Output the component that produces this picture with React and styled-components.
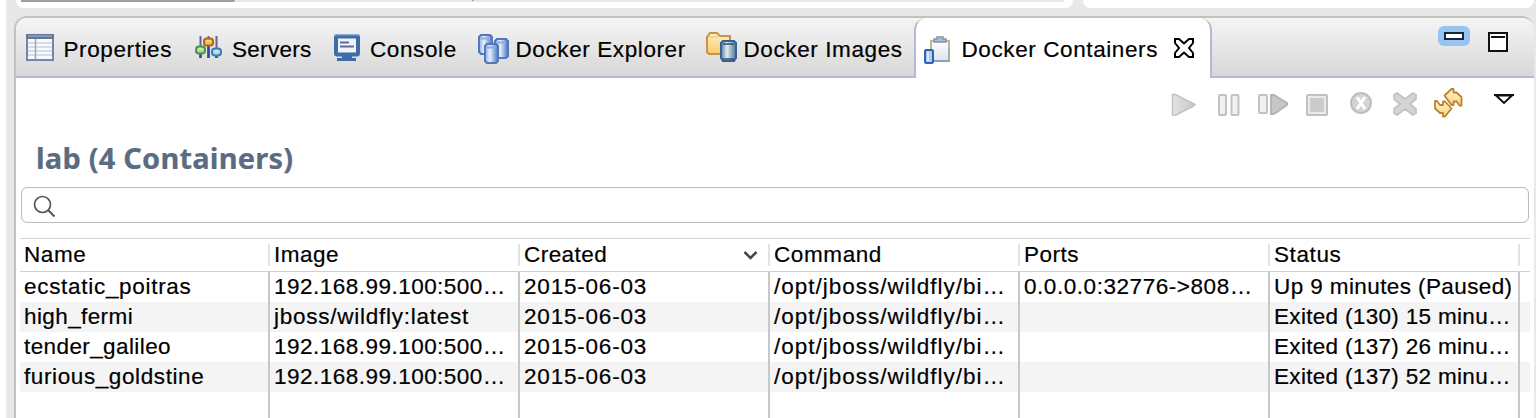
import React from "react";
import styled, { createGlobalStyle } from "styled-components";

const Global = createGlobalStyle`
  * { box-sizing: border-box; }
  body { margin: 0; background: #fff; overflow: hidden; }
`;

const Window = styled.div`
  width: 1536px;
  height: 418px;
  padding-left: 6px;
  font: 22.5px/30px "Liberation Sans", Arial, sans-serif;
  -webkit-text-stroke: 0.2px currentColor;
  color: #000;
  overflow: hidden;
`;
const Workbench = styled.div`
  height: 418px;
  background: #e8e8e8;
  padding: 0 2px 0 8px;
  display: flex;
  flex-direction: column;
`;
const UpperPanes = styled.div`
  display: flex;
  gap: 10px;
  height: 8px;
  padding-left: 2px;
  margin-bottom: 8px;
`;
const UpperPane = styled.div`
  width: ${(p) => p.$width}px;
  background: #fff;
  border-radius: 0 0 9px 9px;
  padding: 0 9px 0 5px;
`;
const ScrollTrack = styled.div`
  height: 2px;
  background: #e8e8e8;
  display: flex;
  gap: 237px;
`;
const ScrollThumb = styled.div`
  width: ${(p) => p.$width}px;
  height: ${(p) => p.$height}px;
  background: #9f9f9f;
  border-radius: 0 0 2px 0;
`;
const View = styled.section`
  flex: 1;
  background: #fff;
  border-top: 2px solid #c3c3bc;
  border-left: 2px solid #c3c3bc;
  border-radius: 13px 12px 0 0;
  overflow: hidden;
`;
const TabBar = styled.div`
  display: flex;
  height: 60px;
  background: linear-gradient(#f5f5f5, #d8d8d8);
  border-bottom: 2px solid #b6bace;
`;
const Tab = styled.div`
  display: flex;
  width: ${(p) => p.$width}px;
  padding: 17px 0 0 ${(p) => p.$pad}px;
  letter-spacing: ${(p) => p.$track ?? 0.6}px;
  white-space: nowrap;
  flex: none;
  svg { margin: ${(p) => p.$iconTop ?? -3}px ${(p) => p.$gap}px 0 0; flex: none; }
`;
const ActiveTab = styled(Tab)`
  height: 60px;
  background: #fff;
  border: solid #b6bace;
  border-width: 0 2px;
  border-radius: 12px 12px 0 0;
`;
const CloseIcon = styled.span`
  margin-left: 15px;
  svg { margin: 2px 0 0; display: block; }
`;
const WindowButtons = styled.div`
  display: flex;
  margin-left: auto;
  padding: 8px 25px 0 0;
  gap: 17px;
`;
const MinimizeButton = styled.div`
  width: 32px;
  height: 20px;
  border-radius: 6px;
  background: #97c4f3;
  padding: 6px 0 0 6px;
  svg { display: block; }
`;
const MaximizeButton = styled.div`
  padding-top: 4px;
  svg { display: block; }
`;
const Toolbar = styled.div`
  display: flex;
  justify-content: flex-end;
  height: 60px;
  padding: 8px 19px 0 0;
`;
const Title = styled.h1`
  margin: 0;
  padding-left: 20px;
  height: 49px;
  font: bold 29px/39px "Noto Sans", sans-serif;
  letter-spacing: 0.2px;
  color: #5b6c82;
`;
const SearchBox = styled.div`
  margin: 0 5px 0 5px;
  height: 36px;
  border: 1px solid #bdbdbd;
  border-radius: 6px;
  box-shadow: inset 0 0 1px #ddd;
  padding: 7px 0 0 11px;
`;
const Table = styled.div`
  margin: 15px 4px 0;
  border-top: 1px solid #d4d4d4;
`;
const HeaderRow = styled.div`
  display: flex;
  height: 33px;
  padding-top: 5px;
  border-bottom: 1px solid #d0d0d0;
`;
const HeaderCell = styled.div`
  display: flex;
  width: 250px;
  height: 22px;
  padding: 0 10px 0 4px;
  line-height: 22px;
  letter-spacing: ${(p) => p.$track ?? 1}px;
  border-right: 2px solid #e2e2e2;
  svg { margin: 6px 0 0 auto; }
`;
const Row = styled.div`
  display: flex;
  height: 30px;
  background: ${(p) => (p.$shaded ? "#f4f4f4" : "#fff")};
`;
const Cell = styled.div`
  width: 250px;
  padding-left: ${(p) => p.$pad ?? 4}px;
  border-right: 2px solid #c8c8c8;
  letter-spacing: ${(p) => p.$track}px;
  white-space: nowrap;
  line-height: 29px;
`;

const PropertiesIcon = () => (
  <svg width="28" height="28" viewBox="0 0 28 28">
    <rect x="1" y="2" width="26" height="25" fill="#f7f9fc" stroke="#7686a7" strokeWidth="2" />
    <path d="M0 1h28v5H0z" fill="#62789b" /><path d="M2 3h24" stroke="#a9b9cf" />
    <path d="M2 10h24M2 14h24M2 18h24M2 22h24" stroke="#ccd3df" strokeWidth="1.5" />
    <path d="M9.5 6v20" stroke="#9ba7bd" strokeWidth="1.5" />
  </svg>
);
const ServersIcon = () => (
  <svg width="28" height="28" viewBox="0 0 28 28">
    <path d="M5.500 4v22M13.500 4v22M21.500 4v22" stroke="#6d5d93" strokeWidth="2" />
    <path d="M5.500 20v6M13.500 14v12M21.500 22v4" stroke="#2e45b5" strokeWidth="2.500" />
    <rect x="1" y="14.500" width="9" height="7" rx="3" fill="#b4dc86" stroke="#469551" strokeWidth="2" />
    <rect x="9" y="6.500" width="9" height="7" rx="2.500" fill="#efbd52" stroke="#ad6b14" strokeWidth="2" />
    <rect x="17" y="16.500" width="9" height="7" rx="3" fill="#a8d9ed" stroke="#3e7db2" strokeWidth="2" />
    <path d="M3 17h5M11 9h5M19 19h5" stroke="#fff" strokeOpacity=".65" />
  </svg>
);
const ConsoleIcon = () => (
  <svg width="28" height="30" viewBox="0 -1 28 30">
    <rect x="3" y="3.500" width="22" height="18" rx="1" fill="#eef3fc" stroke="#3f6da6" strokeWidth="4" />
    <path d="M1 2h26" stroke="#75a8dc" />
    <path d="M7 9.500h9M7 13.500h14" stroke="#60699b" strokeWidth="2" />
    <path d="M9 23h10v2h4v3H4v-3h5z" fill="#3d6ba5" />
  </svg>
);
const Cylinder = ({ x, y, fill = "url(#cyl)" }) => (
  <g transform={`translate(${x} ${y})`}>
    <path d="M3 1h9l2 2v15l-2 2H3l-2-2V3z" fill={fill} stroke="#5277bb" strokeWidth="2" />
    <path d="M3 4.500h9" stroke="#8eaee1" strokeWidth="2" />
  </g>
);
const Gradients = () => (
  <defs>
    <linearGradient id="cyl"><stop stopColor="#8da9e4" /><stop offset=".38" stopColor="#e7f0ff" /><stop offset="1" stopColor="#4f74c1" /></linearGradient>
    <linearGradient id="steel"><stop stopColor="#5b7f9d" /><stop offset=".4" stopColor="#e0eeee" /><stop offset="1" stopColor="#4b7398" /></linearGradient>
    <linearGradient id="folder" x2="0" y2="1"><stop stopColor="#fff0bd" /><stop offset="1" stopColor="#f7cc71" /></linearGradient>
    <linearGradient id="paper" x2="0" y2="1"><stop stopColor="#fff" /><stop offset="1" stopColor="#dce3f4" /></linearGradient>
    <linearGradient id="gray"><stop stopColor="#e3e3e3" /><stop offset="1" stopColor="#c6c6c6" /></linearGradient>
    <linearGradient id="gold" x2="0" y2="1"><stop stopColor="#fff6cf" /><stop offset="1" stopColor="#f6d37c" /></linearGradient>
  </defs>
);
const ExplorerIcon = () => (
  <svg width="31" height="32" viewBox="0 -1 31 32">
    <Gradients />
    <Cylinder x={0} y={1} /><Cylinder x={16} y={5} /><Cylinder x={6} y={10} />
  </svg>
);
const ImagesIcon = () => (
  <svg width="31" height="32" viewBox="0 -1 31 32">
    <path d="M1 5l3-4h7l3 3h10v18H3l-2-2z" fill="url(#folder)" stroke="#ca914a" strokeWidth="2" />
    <path d="M2 5h10" stroke="#efb866" />
    <path d="M17 9h11l2 2v15l-2 3H17l-2-3V11z" fill="url(#steel)" stroke="#365f99" strokeWidth="2" />
    <path d="M17 12h11M17 27h11" stroke="#274d82" strokeWidth="1.500" />
  </svg>
);
const ContainersIcon = () => (
  <svg width="28" height="32" viewBox="0 -2 28 32">
    <rect x="7" y="7" width="18" height="20" fill="url(#paper)" stroke="#bcb78c" strokeWidth="2" />
    <path d="M7 27h19" stroke="#8d9fbd" strokeWidth="2" /><path d="M25 15v12" stroke="#a7ad9f" strokeWidth="2" />
    <path d="M13 3h6v2h3v3H10V5h3z" fill="#aebbd0" stroke="#8393af" strokeWidth="1.500" />
    <path d="M2 16h6l1 1v11l-1 1H2l-1-1V17z" fill="#a7cdef" stroke="#3165ab" strokeWidth="2" />
    <path d="M4 18v9" stroke="#d9ecff" strokeWidth="2" />
  </svg>
);
const TabClose = () => (
  <svg width="22" height="22" viewBox="0 0 22 22">
    <path d="M2 2h4l5 4.500 5-4.500h4v4l-4 5 4 5v4h-4l-5-4.500-5 4.500H2v-4l4-5-4-5z" fill="#fff" stroke="#000" strokeWidth="2" />
  </svg>
);

const ToolbarIcons = () => (
  <svg width="348" height="36" viewBox="1167 86 348 36">
    <path d="M1172.500 94.500h3l19.500 10-2 2-17 8.500h-3.500z" fill="url(#gray)" stroke="#c2c2c2" strokeWidth="1.500" />
    <g fill="#f0f0f0" stroke="#c2c2c2" strokeWidth="2">
      <rect x="1219" y="95" width="7" height="20" rx="1" />
      <rect x="1231.500" y="95" width="7" height="20" rx="1" />
      <rect x="1259" y="95" width="8" height="18" rx="1" />
    </g>
    <path d="M1271 95h3l13 8v2l-13 9h-3z" fill="#c6c6c6" stroke="#b5b5b5" strokeWidth="2" />
    <rect x="1307" y="95" width="20" height="20" rx="1" fill="#eaeaea" stroke="#c0c0c0" strokeWidth="2" />
    <rect x="1310" y="98" width="14" height="14" fill="#cbcbcb" />
    <circle cx="1361" cy="103" r="10" fill="#d4d4d4" stroke="#bebebe" strokeWidth="2" />
    <path d="M1357 97l8 12M1365 97l-8 12" stroke="#fff" strokeWidth="3" />
    <path d="M1394 95l3-2 8 6 8-6 3 2v4l-6 5 6 5v4l-3 2-8-6-8 6-3-2v-4l6-5-6-5z" fill="#d5d5d5" stroke="#c2c2c2" strokeWidth="1.800" strokeLinejoin="round" />
    <g fill="url(#gold)" stroke="#bc8430" strokeWidth="1.800" strokeLinejoin="round">
      <path d="M1444.500 95.500l7-6.500h2v3.500h3l5 4.500v8.500h-2l-3-4h-3v3.500h-2z" />
      <path d="M1435 101h2l3 4h3v-3.500h2l6.500 7-6.500 8h-2V113h-3l-5-4.500z" />
    </g>
    <path d="M1496 95.500h16l-8 7.500z" fill="#fff" stroke="#111" strokeWidth="2" />
    <path d="M1494 95h20" stroke="#111" strokeWidth="2" />
  </svg>
);

const columns = [
  ["Name", 0.6], ["Image", 0.5], ["Created", 0.45], ["Command", 0.6], ["Ports", 0.5], ["Status", 0.6],
];
const date = ["2015-06-03", 0.8];
const command = ["/opt/jboss/wildfly/bi…", 1.0];
const registry = ["192.168.99.100:500…", 0.48];
const rows = [
  [["ecstatic_poitras", 0.7], registry, date, command, ["0.0.0.0:32776->808…", 0.55], ["Up 9 minutes (Paused)", 0.4]],
  [["high_fermi", 0.4], ["jboss/wildfly:latest", 0.75], date, command, ["", 0], ["Exited (130) 15 minu…", 0.32]],
  [["tender_galileo", 0.4], registry, date, command, ["", 0], ["Exited (137) 26 minu…", 0.32]],
  [["furious_goldstine", 0.6], registry, date, command, ["", 0], ["Exited (137) 52 minu…", 0.32]],
  Array(6).fill(["", 0]),
];

export default function App() {
  return (
    <Window>
      <Global />
      <Workbench>
        <UpperPanes>
          <UpperPane $width={1057}>
            <ScrollTrack>
              <ScrollThumb $width={214} $height={2} />
              <ScrollThumb $width={2} $height={1} />
            </ScrollTrack>
          </UpperPane>
          <UpperPane $width={451} />
        </UpperPanes>
        <View>
          <TabBar>
            <Tab $width={170} $pad={10} $gap={9.5} $iconTop={-2}><PropertiesIcon />Properties</Tab>
            <Tab $width={147} $pad={9} $gap={9} $track={0.3}><ServersIcon />Servers</Tab>
            <Tab $width={144} $pad={0} $gap={9}><ConsoleIcon />Console</Tab>
            <Tab $width={229} $pad={1} $gap={6.5}><ExplorerIcon />Docker Explorer</Tab>
            <Tab $width={208} $pad={0} $gap={6.5} $iconTop={-4}><ImagesIcon />Docker Images</Tab>
            <ActiveTab $width={298} $pad={8} $gap={9.5}>
              <ContainersIcon />Docker Containers
              <CloseIcon><TabClose /></CloseIcon>
            </ActiveTab>
            <WindowButtons>
              <MinimizeButton>
                <svg width="20" height="8"><rect x="1" y="1" width="18" height="6" fill="#fff" stroke="#17273b" strokeWidth="2" /></svg>
              </MinimizeButton>
              <MaximizeButton>
                <svg width="22" height="22"><rect x="2" y="3" width="18" height="18" fill="#fff" stroke="#111" strokeWidth="2" /><path d="M4 7h14" stroke="#111" strokeWidth="2" /></svg>
              </MaximizeButton>
            </WindowButtons>
          </TabBar>
          <Toolbar><ToolbarIcons /></Toolbar>
          <Title>lab (4 Containers)</Title>
          <SearchBox>
            <svg width="24" height="24" viewBox="0 0 24 24" fill="none" stroke="#555" strokeWidth="1.700">
              <circle cx="9.500" cy="9.500" r="8" /><path d="M15 15l6.500 6.500" strokeWidth="2" />
            </svg>
          </SearchBox>
          <Table>
            <HeaderRow>
              {columns.map(([label, track]) => (
                <HeaderCell key={label} $track={track}>
                  {label}
                  {label === "Created" && (
                    <svg width="15" height="10"><path d="M1.500 2l6 6 6-6" fill="none" stroke="#444" strokeWidth="2.500" /></svg>
                  )}
                </HeaderCell>
              ))}
            </HeaderRow>
            {rows.map((cells, i) => (
              <Row key={i} $shaded={i % 2 === 1}>
                {cells.map(([text, track], j) => (
                  <Cell key={j} $track={track}>{text}</Cell>
                ))}
              </Row>
            ))}
          </Table>
        </View>
      </Workbench>
    </Window>
  );
}
